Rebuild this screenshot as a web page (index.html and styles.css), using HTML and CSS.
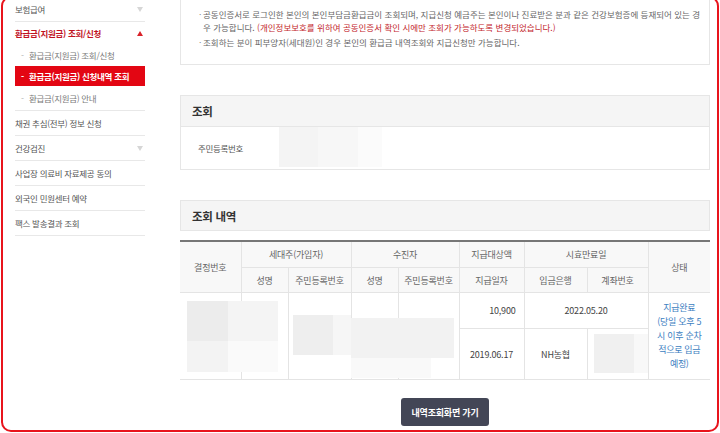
FILE: index.html
```html
<!DOCTYPE html>
<html lang="ko">
<head>
<meta charset="utf-8">
<title>환급금(지원금) 신청내역 조회</title>
<link rel="stylesheet" href="styles.css">
</head>
<body>
<div class="page">
  <aside class="side">
    <ul class="menu">
      <li class="item"><div class="row"><span>보험급여</span><span class="tri down"></span></div></li>
      <li class="item open">
        <div class="row"><span>환급금(지원금) 조회/신청</span><span class="tri up"></span></div>
        <ul class="sub">
          <li>환급금(지원금) 조회/신청</li>
          <li class="on">환급금(지원금) 신청내역 조회</li>
          <li>환급금(지원금) 안내</li>
        </ul>
      </li>
      <li class="item"><div class="row"><span>채권 추심(전부) 정보 신청</span></div></li>
      <li class="item"><div class="row"><span>건강검진</span><span class="tri down"></span></div></li>
      <li class="item"><div class="row"><span>사업장 의료비 자료제공 동의</span></div></li>
      <li class="item"><div class="row"><span>외국인 민원센터 예약</span></div></li>
      <li class="item"><div class="row"><span>팩스 발송결과 조회</span></div></li>
    </ul>
  </aside>

  <main class="main">
    <div class="notice">
      <ul>
        <li><span class="dot">·</span><span>공동인증서로 로그인한 본인의 본인부담금환급금이 조회되며, 지급신청 예금주는 본인이나 진료받은 분과 같은 건강보험증에 등재되어 있는 경<br>우 가능합니다. <em class="red">(개인정보보호를 위하여 공동인증서 확인 시에만 조회가 가능하도록 변경되었습니다.)</em></span></li>
        <li><span class="dot">·</span><span>조회하는 분이 피부양자(세대원)인 경우 본인의 환급금 내역조회와 지급신청만 가능합니다.</span></li>
      </ul>
    </div>

    <section class="search">
      <h2 class="panel-head">조회</h2>
      <div class="search-body">
        <span class="label">주민등록번호</span>
        <span class="mask"></span>
      </div>
    </section>

    <section class="history">
      <h2 class="panel-head">조회 내역</h2>
    </section>

    <div class="tbl-wrap">
      <table>
        <colgroup>
          <col class="c1"><col class="c2"><col class="c3"><col class="c4"><col class="c5"><col class="c6"><col class="c7"><col class="c8"><col class="c9">
        </colgroup>
        <thead>
          <tr class="h1">
            <th rowspan="2">결정번호</th>
            <th colspan="2">세대주(가입자)</th>
            <th colspan="2">수진자</th>
            <th>지급대상액</th>
            <th colspan="2">시효만료일</th>
            <th rowspan="2" class="last">상태</th>
          </tr>
          <tr class="h2">
            <th>성명</th>
            <th>주민등록번호</th>
            <th>성명</th>
            <th>주민등록번호</th>
            <th>지급일자</th>
            <th>입금은행</th>
            <th>계좌번호</th>
          </tr>
        </thead>
        <tbody>
          <tr class="r1">
            <td rowspan="2"></td>
            <td rowspan="2"></td>
            <td rowspan="2"></td>
            <td rowspan="2"></td>
            <td rowspan="2"></td>
            <td class="num">10,900</td>
            <td colspan="2">2022.05.20</td>
            <td rowspan="2" class="status last">지급완료<br>(당일 오후 5<br>시 이후 순차<br>적으로 입금<br>예정)</td>
          </tr>
          <tr class="r2">
            <td>2019.06.17</td>
            <td>NH농협</td>
            <td></td>
          </tr>
        </tbody>
      </table>
      <div class="blur b1a"></div>
      <div class="blur b1b"></div>
      <div class="blur b1c"></div>
      <div class="blur b1d"></div>
      <div class="blur b2a"></div>
      <div class="blur b2b"></div>
      <div class="blur b2c"></div>
      <div class="blur b2d"></div>
      <div class="blur b3a"></div>
      <div class="blur b3b"></div>
    </div>

    <div class="btns">
      <button type="button" class="btn">내역조회화면 가기</button>
    </div>
  </main>
</div>
<div class="frame"></div>
</body>
</html>
```

FILE: styles.css
```css
html, body {
  margin: 0;
  padding: 0;
}
body {
  position: relative;
  height: 433px;
  overflow: hidden;
  background: #fff;
  font-family: "Noto Sans CJK KR", "Noto Sans", sans-serif;
  font-size: 8.5px;
  letter-spacing: -0.3px;
  color: #555;
}

.page {
  display: flex;
  align-items: flex-start;
  padding-left: 15px;
  gap: 35px;
}

/* sidebar */
.side {
  width: 130px;
  flex: none;
  margin-top: -3px;
}
.menu, .sub {
  list-style: none;
  margin: 0;
  padding: 0;
}
.item {
  border-bottom: 1px solid #e8e8e8;
}
.row {
  display: flex;
  align-items: center;
  justify-content: space-between;
  height: 24px;
  color: #555;
}
.open .row {
  height: 22px;
  color: #c1121f;
  font-weight: 700;
}
.tri {
  width: 0;
  height: 0;
  margin-right: 2px;
  border-left: 3.5px solid transparent;
  border-right: 3.5px solid transparent;
}
.tri.down {
  border-top: 5px solid #d6d6d6;
}
.tri.up {
  border-bottom: 5px solid #d9222a;
}
.sub {
  padding-bottom: 2px;
}
.sub li {
  display: flex;
  align-items: center;
  height: 21px;
  padding-left: 6px;
  color: #7a7a7a;
}
.sub li::before {
  content: "-";
  width: 8px;
  color: #b0b0b0;
}
.sub li.on {
  height: 20px;
  margin: 1px 0;
  background: #e30613;
  color: #fff;
  font-weight: 700;
}
.sub li.on::before {
  color: #fff;
}

/* main */
.main {
  width: 530px;
  flex: none;
}
.notice {
  border: 1px solid #e6e6e6;
  border-top: none;
  padding: 8px 4px 15px 18px;
  color: #666;
  letter-spacing: 0;
}
.notice ul {
  list-style: none;
  margin: 0;
  padding: 0;
}
.notice li {
  display: flex;
  line-height: 13px;
}
.notice li + li {
  margin-top: 2px;
}
.dot {
  width: 4px;
  flex: none;
  color: #888;
}
.red {
  font-style: normal;
  color: #c3262d;
}

.panel-head {
  display: flex;
  align-items: center;
  margin: 0;
  padding-left: 11px;
  background: #f5f5f5;
  border: 1px solid #e6e6e6;
  font-size: 11.5px;
  font-weight: 700;
  color: #333;
  letter-spacing: -0.3px;
}
.search {
  margin-top: 30px;
}
.search .panel-head {
  height: 30px;
}
.search-body {
  display: flex;
  align-items: flex-start;
  height: 42px;
  border: 1px solid #e6e6e6;
  border-top: none;
}
.label {
  width: 81px;
  padding-left: 17px;
  line-height: 42px;
  color: #555;
}
.mask {
  width: 103px;
  height: 40px;
  background: linear-gradient(to right, #f4f4f4 0, #f4f4f4 39px, #f7f7f7 39px, #f7f7f7 79px, #fbfbfb 79px);
}

.history {
  margin-top: 30px;
}
.history .panel-head {
  height: 29px;
}

.tbl-wrap {
  position: relative;
  margin-top: 9px;
  font-size: 9px;
  letter-spacing: -0.2px;
}
table {
  width: 530px;
  border-collapse: collapse;
  table-layout: fixed;
  border-top: 2px solid #777;
  border-bottom: 1px solid #cfcfcf;
}
.c1 { width: 61px; }
.c2 { width: 47px; }
.c3 { width: 63px; }
.c4 { width: 47px; }
.c5 { width: 61px; }
.c6 { width: 65px; }
.c7 { width: 63px; }
.c8 { width: 61px; }
.c9 { width: 62px; }

th, td {
  padding: 0;
  border: 1px solid #e4e4e4;
  text-align: center;
  vertical-align: middle;
}
th:first-child, td:first-child {
  border-left: none;
}
th.last, td.last {
  border-right: none;
}
th {
  background: #f8f8f8;
  font-weight: 400;
  color: #666;
}
.h1 th {
  height: 25px;
}
.h2 th {
  height: 24px;
}
td {
  color: #444;
}
.r1 td {
  height: 35px;
}
.r2 td {
  height: 50px;
}
td.num {
  text-align: right;
  padding-right: 8px;
}
td.status {
  color: #3c7ebf;
  line-height: 14px;
  letter-spacing: -0.3px;
}

.blur {
  position: absolute;
}
.b1a { left: 7px;   top: 61px;  width: 41px;  height: 40px; background: #ececec; }
.b1b { left: 48px;  top: 61px;  width: 50px;  height: 40px; background: #f4f4f4; }
.b1c { left: 7px;   top: 101px; width: 41px;  height: 31px; background: #f3f3f3; }
.b1d { left: 48px;  top: 101px; width: 50px;  height: 31px; background: #fafafa; }
.b2a { left: 113px; top: 75px;  width: 40px;  height: 40px; background: #eeeeee; }
.b2b { left: 153px; top: 75px;  width: 18px;  height: 40px; background: #f6f6f6; }
.b2c { left: 171px; top: 78px;  width: 103px; height: 40px; background: #f2f2f2; }
.b2d { left: 171px; top: 118px; width: 80px;  height: 20px; background: #f9f9f9; }
.b3a { left: 414px; top: 94px;  width: 40px;  height: 39px; background: #f0f0f0; }
.b3b { left: 454px; top: 94px;  width: 14px;  height: 39px; background: #f8f8f8; }

.btns {
  display: flex;
  justify-content: center;
  margin-top: 18px;
}
.btn {
  width: 88px;
  height: 28px;
  padding: 0;
  border: none;
  border-radius: 3px;
  background: #434656;
  color: #fff;
  font-family: "Noto Sans CJK KR", "Noto Sans", sans-serif;
  font-size: 9px;
  font-weight: 700;
  letter-spacing: -0.2px;
}

.frame {
  position: absolute;
  left: 1px;
  right: 1px;
  top: -4px;
  bottom: 1px;
  border: 2px solid #e8141c;
  border-radius: 10px;
  pointer-events: none;
}
```
